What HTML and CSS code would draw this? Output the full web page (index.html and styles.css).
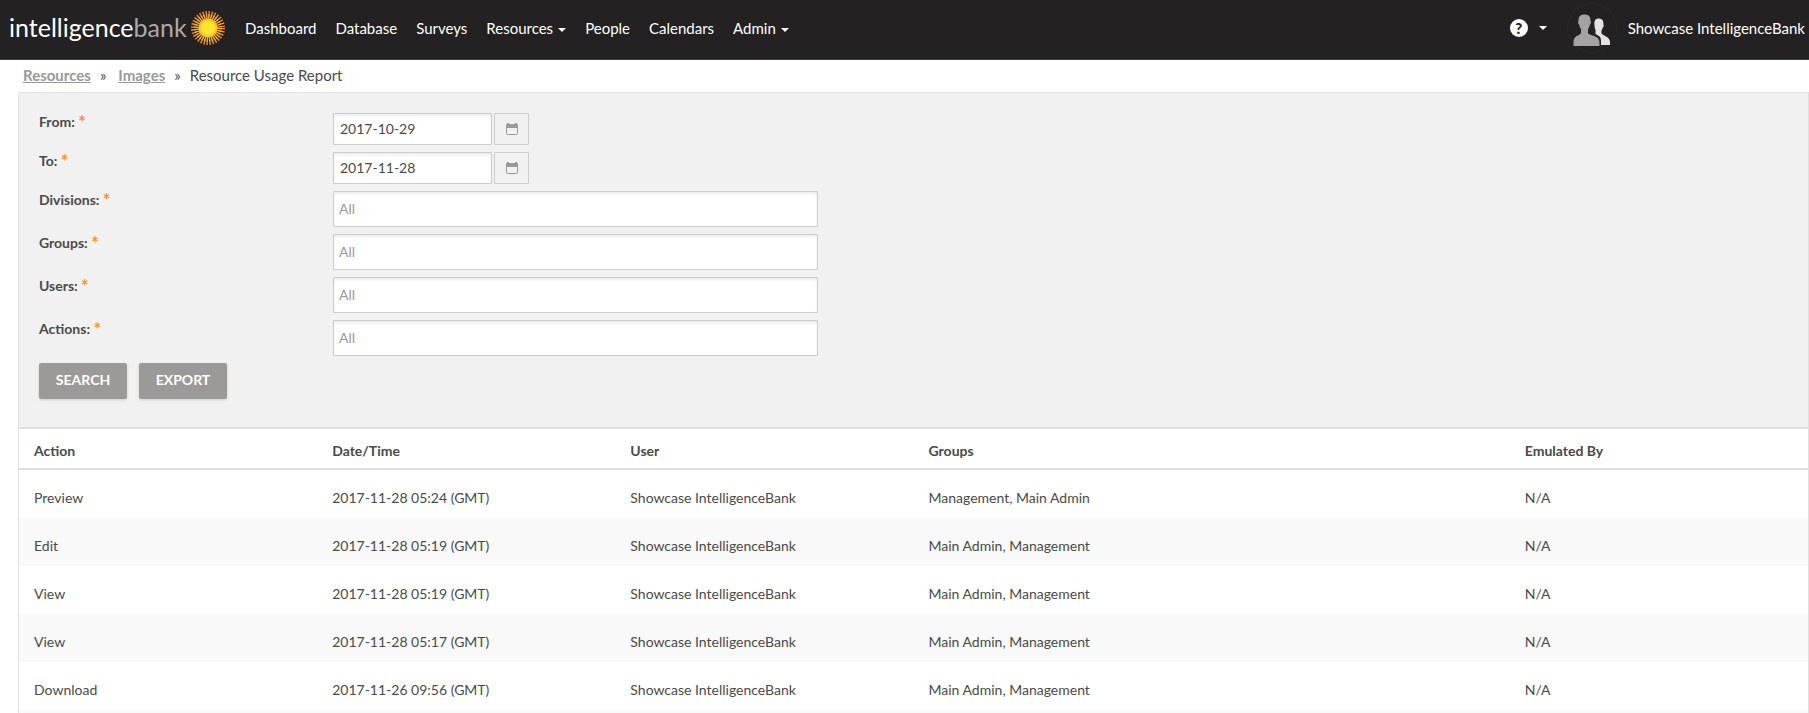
FILE: index.html
```html
<!DOCTYPE html>
<html lang="en">
<head>
  <meta charset="UTF-8" />
  <title>Resource Usage Report - IntelligenceBank</title>
  <meta name="viewport" content="width=device-width, initial-scale=1.0"/>
  <link rel="stylesheet" href="styles.css">
</head>
<body>

  <header class="topbar">
    <a class="logo" href="#dashboard">
      <span class="logo-text">intelligence<span class="logo-bank">bank</span></span>
      <svg class="logo-sun" viewBox="0 0 36 36" aria-hidden="true">
        <circle cx="18" cy="18" r="13" fill="none" stroke="#f08a24" stroke-width="8" stroke-dasharray="1.2 1.353"/>
        <circle cx="18" cy="18" r="11.5" fill="none" stroke="#f9b233" stroke-width="5" stroke-dasharray="1.2 1.058"/>
        <circle cx="18" cy="18" r="9.5" fill="#fcc52c"/>
        <circle cx="18" cy="18" r="7" fill="#fde530"/>
      </svg>
    </a>

    <nav>
      <ul>
        <li><a href="#dashboard">Dashboard</a></li>
        <li><a href="#database">Database</a></li>
        <li><a href="#surveys">Surveys</a></li>
        <li><a href="#resources">Resources<span class="caret"></span></a></li>
        <li><a href="#people">People</a></li>
        <li><a href="#calendars">Calendars</a></li>
        <li><a href="#admin">Admin<span class="caret"></span></a></li>
      </ul>
    </nav>

    <div class="account">
      <button class="help" type="button" aria-label="Help">
        <span class="help-icon">?</span>
        <span class="caret"></span>
      </button>
      <a class="profile" href="#profile">
        <svg class="avatar" viewBox="0 0 50 50" aria-hidden="true">
          <circle cx="25" cy="25" r="24.5" fill="none" stroke="#2a2829"/>
          <path fill="#e2e2e2" d="M27.500 22c-.7-4.500 1.200-6.500 4.300-6.500s5 2 4.600 6c.7.600.3 2.400-.6 3-.3 1.300-.7 2-1.300 2.800v3.200c1.500 2.500 8.500 3 8.500 8.500V42H34v-4c0-4-1.500-5-5.500-7v-4c-.7-1.500-1-3-1-5z"/>
          <path fill="#a3a3a3" stroke="#232122" stroke-width="1" paint-order="stroke" d="M17.500 11.500c4 0 6.200 2 6 6.500.8.700.4 3-.7 3.700-.4 2-1 3.300-1.800 4.300v4.200c1.500 2.500 11.500 2.200 11.500 8.800V43H6.500v-4c0-6.600 6-6.300 7.500-8.800V26c-.8-1-1.400-2.300-1.800-4.300-1.100-.7-1.500-3-.7-3.700-.2-4.500 2-6.500 6-6.500z"/>
        </svg>
        Showcase IntelligenceBank
      </a>
    </div>
  </header>

  <div class="breadcrumb">
    <a href="#resources">Resources</a>
    <span class="sep">»</span>
    <a href="#images">Images</a>
    <span class="sep">»</span>
    <span>Resource Usage Report</span>
  </div>

  <main class="report">
    <form class="filters">
      <div class="field">
        <label for="from">From: <span class="required">*</span></label>
        <div class="date">
          <input type="text" id="from" value="2017-10-29">
          <button type="button" aria-label="Pick from date">
            <svg viewBox="0 0 14 14" aria-hidden="true"><path d="M3 1v2M11 1v2" stroke="#999" stroke-width="2"/><rect x="1" y="2" width="12" height="4" rx="1" fill="#999"/><rect x="1.500" y="3.500" width="11" height="9" rx="1" fill="none" stroke="#999"/></svg>
          </button>
        </div>
      </div>
      <div class="field">
        <label for="to">To: <span class="required">*</span></label>
        <div class="date">
          <input type="text" id="to" value="2017-11-28">
          <button type="button" aria-label="Pick to date">
            <svg viewBox="0 0 14 14" aria-hidden="true"><path d="M3 1v2M11 1v2" stroke="#999" stroke-width="2"/><rect x="1" y="2" width="12" height="4" rx="1" fill="#999"/><rect x="1.500" y="3.500" width="11" height="9" rx="1" fill="none" stroke="#999"/></svg>
          </button>
        </div>
      </div>
      <div class="field">
        <label for="divisions">Divisions: <span class="required">*</span></label>
        <input class="wide" type="text" id="divisions" placeholder="All">
      </div>
      <div class="field">
        <label for="groups">Groups: <span class="required">*</span></label>
        <input class="wide" type="text" id="groups" placeholder="All">
      </div>
      <div class="field">
        <label for="users">Users: <span class="required">*</span></label>
        <input class="wide" type="text" id="users" placeholder="All">
      </div>
      <div class="field">
        <label for="actions">Actions: <span class="required">*</span></label>
        <input class="wide" type="text" id="actions" placeholder="All">
      </div>
      <div class="buttons">
        <button type="button">SEARCH</button>
        <button type="button">EXPORT</button>
      </div>
    </form>

    <table>
      <colgroup>
        <col span="3" class="col">
        <col class="col-groups">
        <col class="col">
      </colgroup>
      <thead>
        <tr>
          <th>Action</th>
          <th>Date/Time</th>
          <th>User</th>
          <th>Groups</th>
          <th>Emulated By</th>
        </tr>
      </thead>
      <tbody>
        <tr>
          <td>Preview</td>
          <td>2017-11-28 05:24 (GMT)</td>
          <td>Showcase IntelligenceBank</td>
          <td>Management, Main Admin</td>
          <td>N/A</td>
        </tr>
        <tr>
          <td>Edit</td>
          <td>2017-11-28 05:19 (GMT)</td>
          <td>Showcase IntelligenceBank</td>
          <td>Main Admin, Management</td>
          <td>N/A</td>
        </tr>
        <tr>
          <td>View</td>
          <td>2017-11-28 05:19 (GMT)</td>
          <td>Showcase IntelligenceBank</td>
          <td>Main Admin, Management</td>
          <td>N/A</td>
        </tr>
        <tr>
          <td>View</td>
          <td>2017-11-28 05:17 (GMT)</td>
          <td>Showcase IntelligenceBank</td>
          <td>Main Admin, Management</td>
          <td>N/A</td>
        </tr>
        <tr>
          <td>Download</td>
          <td>2017-11-26 09:56 (GMT)</td>
          <td>Showcase IntelligenceBank</td>
          <td>Main Admin, Management</td>
          <td>N/A</td>
        </tr>
      </tbody>
    </table>
    <div class="table-end"></div>
  </main>

</body>
</html>
```
FILE: styles.css
```css
* {
  box-sizing: border-box;
}

body {
  margin: 0;
  font-family: Lato, "Open Sans", sans-serif;
  font-size: 14px;
  line-height: 20px;
  background-color: #fff;
  color: #4a4a4a;
}

input,
button {
  font-family: inherit;
  font-size: 14px;
  color: inherit;
}

/* Top bar */

.topbar {
  display: flex;
  align-items: center;
  height: 60px;
  padding: 0 4px 3px 9px;
  background-color: #232122;
  border-bottom: 1px solid #3d3b3c;
  font-size: 15px;
}

.topbar a {
  color: #fff;
  text-decoration: none;
}

.logo {
  display: flex;
  align-items: center;
  gap: 4px;
}

.logo-text {
  width: 177px;
  padding-bottom: 2px;
  font-size: 25px;
  line-height: 32px;
}

.logo-bank {
  color: #aaa;
}

.logo-sun {
  width: 36px;
  height: 36px;
}

nav ul {
  display: flex;
  gap: 19px;
  list-style: none;
  margin: 0;
  padding: 0 0 0 19px;
}

.caret {
  display: inline-block;
  margin-left: 5px;
  vertical-align: middle;
  border: 4px solid transparent;
  border-top-color: #fff;
  border-bottom: 0;
}

.account {
  display: flex;
  align-items: center;
  gap: 20px;
  margin-left: auto;
}

.help {
  display: flex;
  align-items: center;
  gap: 6px;
  padding: 0;
  border: 0;
  background: none;
}

.help-icon {
  width: 18px;
  height: 18px;
  border-radius: 50%;
  background-color: #fff;
  color: #232122;
  font-size: 15px;
  font-weight: 900;
  line-height: 18px;
  text-align: center;
}

.profile {
  display: flex;
  align-items: center;
  gap: 11px;
}

.avatar {
  width: 50px;
  height: 50px;
}

/* Breadcrumb */

.breadcrumb {
  display: flex;
  height: 32px;
  padding: 5px 23px;
  font-size: 15px;
}

.breadcrumb a {
  color: #999;
  font-weight: bold;
}

.sep {
  margin: 0 9px;
}

.sep + a {
  margin-left: 3px;
}

/* Filters */

.report {
  margin-left: 18px;
  border: 1px solid #e0e0e0;
  border-bottom: 0;
}

.filters {
  padding: 20px 20px 28px;
  background-color: #f1f1f1;
  border-bottom: 2px solid #e0e0e0;
}

.field {
  display: flex;
  align-items: flex-start;
  margin-bottom: 7px;
}

.field label {
  width: 294px;
  font-weight: bold;
  line-height: 18px;
}

.required {
  color: #f7923a;
  font-size: 18px;
  line-height: 1;
  vertical-align: text-top;
}

.date {
  display: flex;
  gap: 2px;
}

.field input {
  width: 159px;
  height: 32px;
  padding: 0 6px 2px;
  border: 1px solid #ccc;
  border-radius: 1px;
  background-color: #fff;
  box-shadow: inset 0 2px 3px rgba(0, 0, 0, 0.08);
}

.field .wide {
  width: 485px;
  height: 36px;
  padding: 0 5px 2px;
}

.field input::placeholder {
  color: #999;
}

.date button {
  display: flex;
  align-items: center;
  justify-content: center;
  width: 35px;
  height: 32px;
  padding: 0;
  border: 1px solid #ccc;
  border-radius: 1px;
  background-color: #f1f1f1;
}

.date svg {
  width: 14px;
  height: 14px;
}

.buttons {
  display: flex;
  gap: 12px;
}

.buttons button {
  width: 88px;
  height: 36px;
  padding: 0 0 3px;
  border: 0;
  border-radius: 2px;
  background-color: #9b9a99;
  color: #fff;
  font-weight: bold;
  box-shadow: 0 1px 3px rgba(0, 0, 0, 0.15);
}

/* Results */

table {
  width: 100%;
  border-collapse: collapse;
  table-layout: fixed;
}

.col-groups {
  width: 33.33%;
}

th,
td {
  padding: 18px 15px 10px;
  text-align: left;
}

th {
  padding: 12px 15px 7px;
  border-bottom: 2px solid #e0e0e0;
}

tbody tr:nth-child(even),
.table-end {
  background-color: #f9f9f9;
}

.table-end {
  height: 3px;
}
```
